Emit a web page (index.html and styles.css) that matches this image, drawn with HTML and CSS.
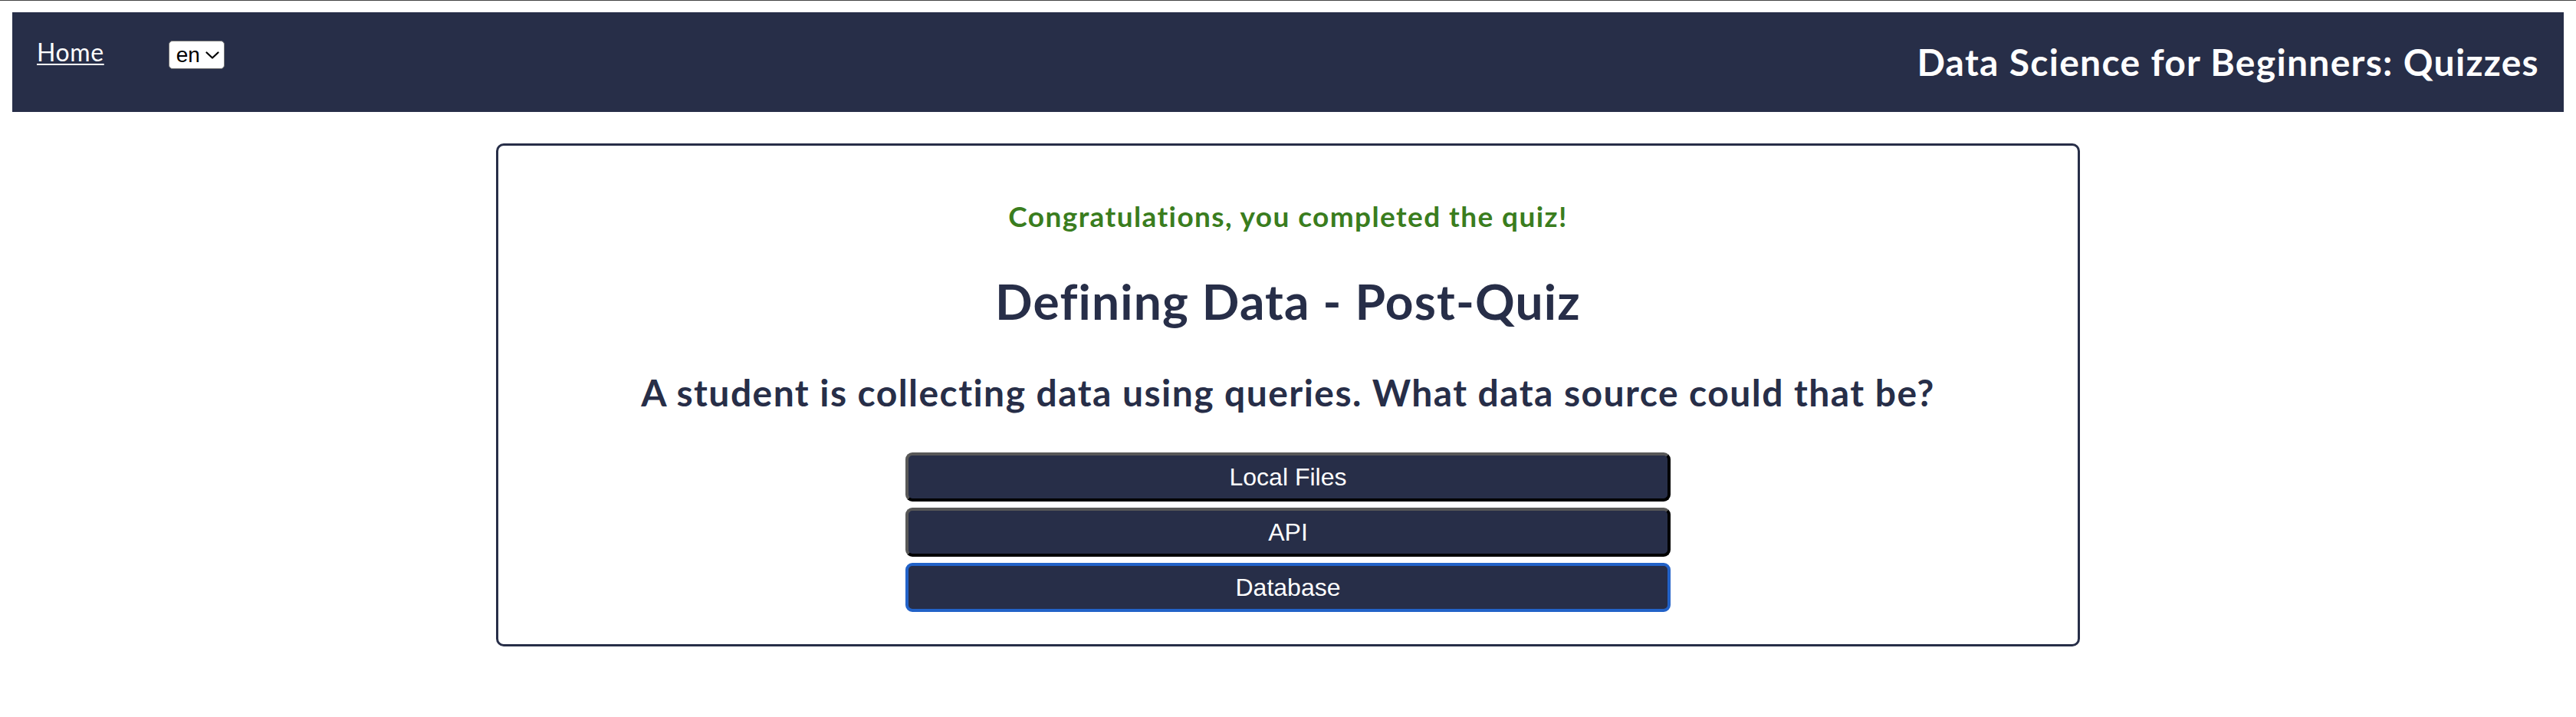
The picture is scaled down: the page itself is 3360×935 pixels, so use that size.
FILE: index.html
```html
<!DOCTYPE html>
<html lang="en">
<head>
<meta charset="utf-8">
<title>Data Science for Beginners: Quizzes</title>
<link rel="stylesheet" href="styles.css">
</head>
<body>
  <nav class="topbar">
    <div class="nav-left">
      <a class="home-link" href="#">Home</a>
      <div class="lang-wrap">
        <select class="lang">
          <option>en</option>
        </select>
        <svg class="lang-chevron" width="18" height="10" viewBox="0 0 18 10" aria-hidden="true">
          <path d="M1.5 1.5 L9 8.5 L16.5 1.5" fill="none" stroke="#000" stroke-width="2.2" stroke-linecap="round" stroke-linejoin="round"/>
        </svg>
      </div>
    </div>
    <h1 class="site-title">Data Science for Beginners: Quizzes</h1>
  </nav>
  <main class="quiz-card">
    <p class="congrats">Congratulations, you completed the quiz!</p>
    <h2 class="quiz-title">Defining Data - Post-Quiz</h2>
    <h3 class="question">A student is collecting data using queries. What data source could that be?</h3>
    <div class="answers">
      <button class="answer">Local Files</button>
      <button class="answer">API</button>
      <button class="answer answer-focused">Database</button>
    </div>
  </main>
</body>
</html>
```
FILE: styles.css
```css
html {
  border-top: 1px solid #454545;
  background: #ffffff;
}

body {
  margin: 15px 16px 0 16px;
  font-family: Lato, "Noto Sans", sans-serif;
  color: #272e48;
}

.topbar {
  display: flex;
  justify-content: space-between;
  height: 130px;
  padding: 0 32px;
  box-sizing: border-box;
  background: #272e48;
}

.nav-left {
  display: flex;
  align-items: flex-start;
  padding-top: 33px;
  gap: 84px;
}

.home-link {
  color: #ffffff;
  font-size: 32px;
  line-height: 38px;
  letter-spacing: 0.6px;
  text-decoration: underline;
  text-decoration-thickness: 2px;
  text-underline-offset: 3px;
}

.lang-wrap {
  position: relative;
  margin-top: 4px;
}

.lang {
  display: block;
  -webkit-appearance: none;
  appearance: none;
  width: 73px;
  height: 37px;
  box-sizing: border-box;
  font-family: "Liberation Sans", Arial, sans-serif;
  font-size: 28px;
  line-height: 35px;
  color: #000;
  background: #fff;
  border: 1px solid #767676;
  border-radius: 5px;
  padding: 0 0 0 9px;
}

.lang-chevron {
  position: absolute;
  left: 48px;
  top: 14px;
  pointer-events: none;
}

.site-title {
  align-self: center;
  margin: 0;
  color: #ffffff;
  font-size: 48px;
  line-height: 58px;
  font-weight: 700;
  letter-spacing: 1.3px;
}

.quiz-card {
  box-sizing: border-box;
  width: 2066px;
  margin: 41px auto 0;
  padding: 69px 0 42px;
  border: 3px solid #272e48;
  border-radius: 10px;
  text-align: center;
}

.congrats {
  margin: 0;
  color: #3a7d1e;
  font-size: 37px;
  line-height: 45px;
  font-weight: 700;
  letter-spacing: 1.4px;
}

.quiz-title {
  margin: 50px 0 0;
  font-size: 64px;
  line-height: 77px;
  font-weight: 700;
  letter-spacing: 1.2px;
}

.question {
  margin: 52px 0 0;
  font-size: 48px;
  line-height: 58px;
  font-weight: 700;
  letter-spacing: 1.45px;
}

.answers {
  display: flex;
  flex-direction: column;
  gap: 8px;
  width: 998px;
  margin: 49px auto 0;
}

.answer {
  height: 64px;
  padding: 0;
  background: #272e48;
  color: #ffffff;
  font-family: "Liberation Sans", Arial, sans-serif;
  font-size: 32px;
  border: 4px solid;
  border-color: #585858 #000000 #000000 #585858;
  border-radius: 9px;
}

.answer-focused {
  border-color: #2262c8;
}
```
